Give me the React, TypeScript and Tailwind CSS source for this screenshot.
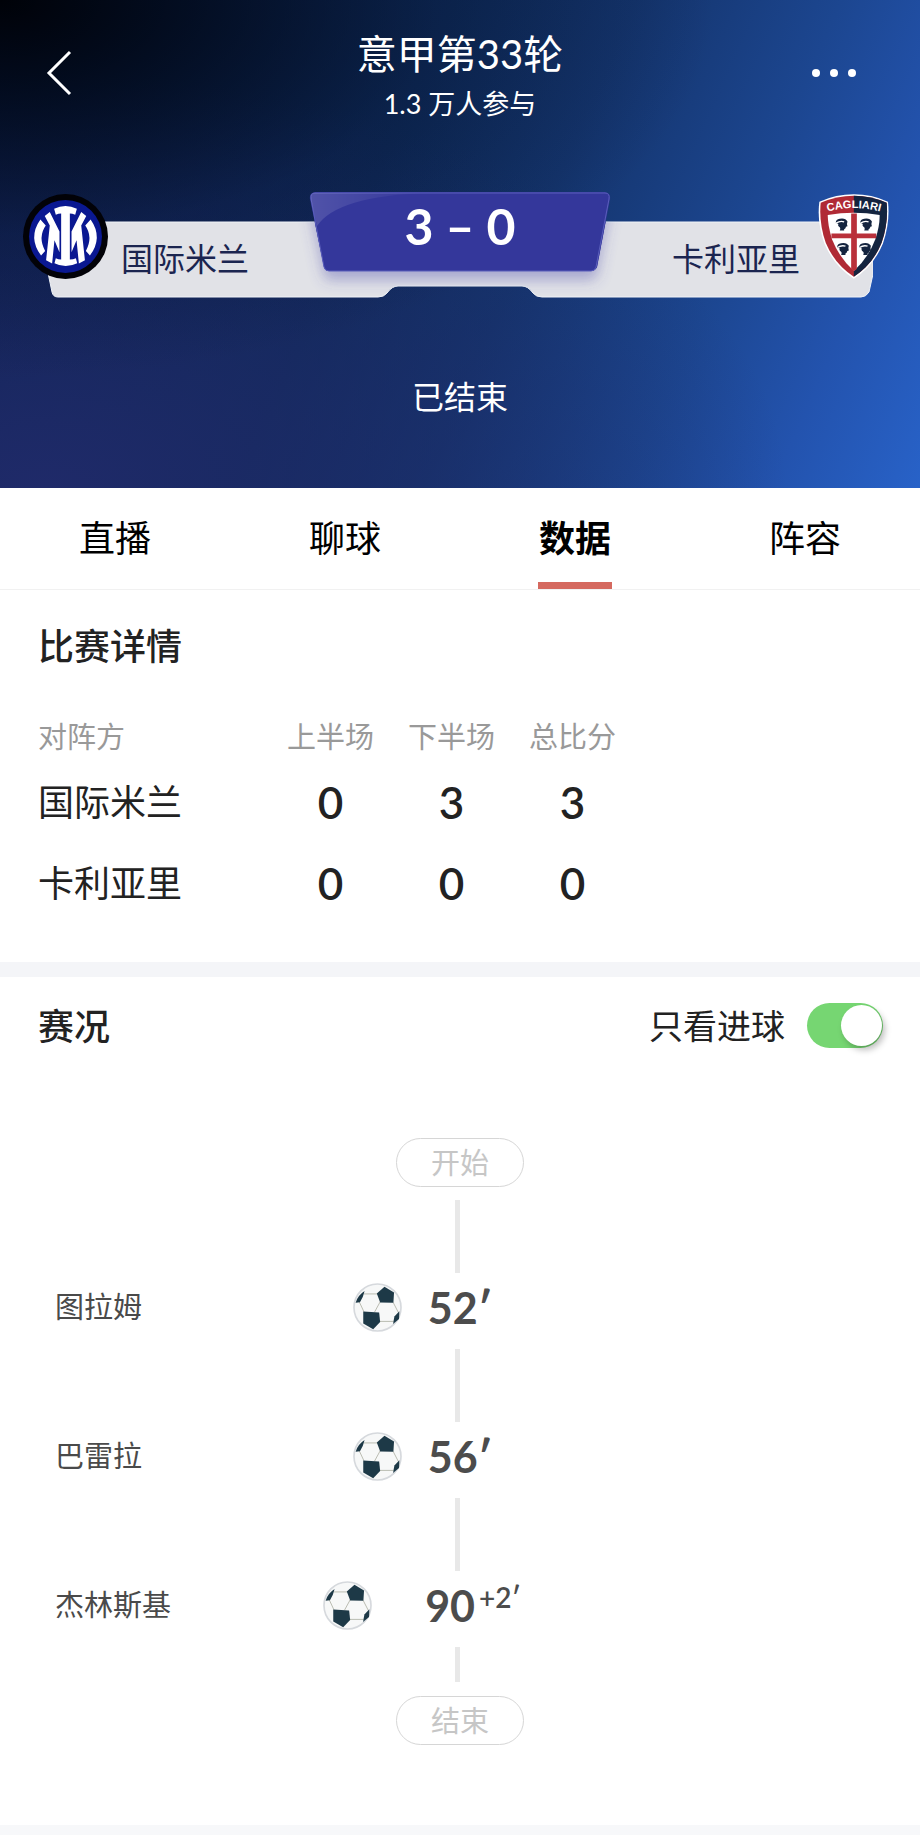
import { useState } from "react";

const tabs = ["直播", "聊球", "数据", "阵容"];

const scores = [
  { team: "国际米兰", values: [0, 3, 3] },
  { team: "卡利亚里", values: [0, 0, 0] },
];

const goals = [
  { player: "图拉姆", minute: "52", extra: "" },
  { player: "巴雷拉", minute: "56", extra: "" },
  { player: "杰林斯基", minute: "90", extra: "+2" },
];

function InterCrest() {
  return (
    <svg viewBox="10 12 254 254" className="size-[85px] shrink-0" role="img" aria-label="国际米兰">
      <circle cx="137" cy="139" r="127" fill="#020207" />
      <circle cx="137" cy="139" r="109" fill="#0a1891" />
      <g fill="#fff">
        <path d="M103 56Q137 40 171 56L166 74Q157 70 150 70V208Q160 208 168 204L172 219Q137 236 104 219L108 204Q116 208 124 208V70Q116 70 108 74Z" />
        <path d="M90 66L75 78L90 106L79 210L97 220L104 150L119 186V124Z" />
        <path d="M184 66L199 78L184 106L195 210L177 220L170 150L155 186V124Z" />
        <path d="M62 88Q24 142 64 196L76 182Q54 140 78 106Z" />
        <path d="M212 88Q250 142 210 196L198 182Q220 140 196 106Z" />
      </g>
    </svg>
  );
}

function MoorHead({ x, y }: { x: number; y: number }) {
  return (
    <g transform={`translate(${x} ${y})`}>
      <path d="M-17-4Q-17-15-5-16Q12-19 18-8Q15 0 18 6Q12 6 12 12Q6 15 8 19H-5Q-1 10-8 7Q-12 4-9 0Z" fill="#14243f" />
      <path d="M-16-3Q-4-11 8-7" stroke="#fff" strokeWidth="4" fill="none" />
    </g>
  );
}

function CagliariCrest() {
  return (
    <svg viewBox="24 16 212 254" className="h-[85px] w-[71px] shrink-0" role="img" aria-label="卡利亚里">
      <defs>
        <path id="crest-arc" d="M50 69Q130 47 212 69" />
        <clipPath id="crest-right">
          <rect x="131" y="10" width="110" height="265" />
        </clipPath>
      </defs>
      <path d="M28 39Q78 17 131 17Q184 17 233 39Q240 100 218 164Q190 232 131 269Q72 232 43 164Q20 100 28 39Z" fill="#fff" />
      <path d="M32 42Q80 21 131 21Q182 21 229 42Q235 100 214 162Q188 226 131 263Q74 226 47 162Q26 100 32 42Z" fill="#b02a35" />
      <path clipPath="url(#crest-right)" d="M32 42Q80 21 131 21Q182 21 229 42Q235 100 214 162Q188 226 131 263Q74 226 47 162Q26 100 32 42Z" fill="#14243f" />
      <path d="M53 79Q131 65 208 79Q209 110 195 152Q175 206 131 246Q87 206 66 152Q53 110 53 79Z" fill="#fff" />
      <path d="M123 74H140V240L131 247L123 240ZM64 134H198V148H64Z" fill="#b9303a" />
      <MoorHead x={94} y={106} />
      <MoorHead x={167} y={106} />
      <MoorHead x={98} y={179} />
      <MoorHead x={164} y={179} />
      <text fill="#fff" fontSize="33" fontWeight="700" fontFamily="Liberation Sans, sans-serif" textAnchor="middle">
        <textPath href="#crest-arc" startOffset="50%">CAGLIARI</textPath>
      </text>
    </svg>
  );
}

function Ball() {
  return (
    <svg viewBox="9 9 148 148" className="size-[49px] shrink-0" role="img" aria-label="进球">
      <circle cx="83" cy="83" r="71" fill="#f7f8f8" stroke="#d6d9dd" strokeWidth="5" />
      <path d="M42 42H84M130 67L146 98M91 66L74 97M42 96L28 66M88 125H132" fill="none" stroke="#b9bbb0" strokeWidth="3" />
      <path d="M104 20L133 38L131 69L91 68L81 41Z" fill="#1d3947" />
      <path d="M40 95L88 98L91 127L70 149L40 131Z" fill="#1d3947" />
      <path d="M44 33Q22 47 17 69L30 67Q40 52 44 33Z" fill="#1d3947" />
      <path d="M149 94L148 118L130 133L134 110Z" fill="#1d3947" />
    </svg>
  );
}

function MatchBanner() {
  return (
    <svg viewBox="0 0 826 130" preserveAspectRatio="none" className="absolute inset-0 h-full w-full" aria-hidden="true">
      <defs>
        <filter id="plate-shadow" x="-10%" y="-20%" width="120%" height="160%">
          <feDropShadow dx="0" dy="9" stdDeviation="7" floodColor="#4a45a8" floodOpacity="0.38" />
        </filter>
        <clipPath id="wings">
          <path d="M0 30H826L826 82L822 100Q819 105 814 105H495Q489 105 486 101Q481 94 475 94H351Q345 94 340 101Q337 105 331 105H11Q6 105 5 100L0 76Z" />
        </clipPath>
        <linearGradient id="plate-shine" x1="0" y1="0" x2="1" y2="0">
          <stop offset="0" stopColor="#fff" stopOpacity="0.14" />
          <stop offset="1" stopColor="#fff" stopOpacity="0" />
        </linearGradient>
      </defs>
      <path d="M0 30H826L826 82L822 100Q819 105 814 105H495Q489 105 486 101Q481 94 475 94H351Q345 94 340 101Q337 105 331 105H11Q6 105 5 100L0 76Z" fill="#e1e2e7" stroke="#f0f3f8" />
      <g clipPath="url(#wings)">
        <path d="M268 0H558Q564 1 563 7L550 75Q548 79 544 79H282Q278 79 277 75L263 7Q262 1 268 0Z" fill="#34379b" filter="url(#plate-shadow)" />
      </g>
      <path d="M268 0H558Q564 1 563 7L550 75Q548 79 544 79H282Q278 79 277 75L263 7Q262 1 268 0Z" fill="#34379b" />
      <path d="M268 1H558Q563 1 562 7L549 75Q548 79 544 79H282Q278 79 277 75L264 7Q263 1 268 1Z" fill="none" stroke="#5a5ebb" />
      <path d="M268 1H380Q290 4 270 34L264 7Q263 1 268 1Z" fill="url(#plate-shine)" />
    </svg>
  );
}

function Connector({ short = false }: { short?: boolean }) {
  return <div className={short ? "mr-[5px] h-[35px] w-[5px] bg-[#e8e8e8]" : "mr-[5px] h-[73px] w-[5px] bg-[#e8e8e8]"} />;
}

function Pill({ children }: { children: string }) {
  return (
    <div className="flex h-[49px] w-32 items-center justify-center rounded-full border border-[#d6d6d6] text-[29px] leading-none text-[#c6c6c6]">
      {children}
    </div>
  );
}

export default function App() {
  const [active, setActive] = useState("数据");
  const [goalsOnly, setGoalsOnly] = useState(true);

  return (
    <div className="min-h-screen bg-white font-['Lato','Noto_Sans_CJK_SC',sans-serif] text-[#222]">
      <header className="bg-[radial-gradient(ellipse_at_0%_0%,#000208_0%,rgba(0,6,18,0.75)_14%,rgba(4,16,44,0.3)_34%,rgba(0,10,40,0)_55%),radial-gradient(ellipse_at_5%_100%,#1f2a69_0%,rgba(31,42,105,0)_60%),linear-gradient(114deg,#0a1d48_0%,#0e2a58_40%,#14346c_56%,#1c4690_74%,#2353ae_87%,#2862c8_100%)] pb-[71px] text-white">
        <div className="flex items-start justify-between px-10 pt-8">
          <button type="button" aria-label="返回" className="mt-[13px] flex h-14 w-20 items-center">
            <svg viewBox="0 0 40 50" className="h-[50px] w-10" fill="none" stroke="currentColor" strokeWidth="3">
              <path d="M30 4L9 25L30 46" />
            </svg>
          </button>
          <div className="flex flex-col items-center">
            <h1 className="text-[40px] leading-[44px]">意甲第33轮</h1>
            <p className="mt-3 text-[27px] leading-8">1.3 万人参与</p>
          </div>
          <button type="button" aria-label="更多" className="mt-[13px] flex h-14 w-20 items-center justify-end gap-[10px] pr-6">
            <span className="size-2 shrink-0 rounded-full bg-white" />
            <span className="size-2 shrink-0 rounded-full bg-white" />
            <span className="size-2 shrink-0 rounded-full bg-white" />
          </button>
        </div>

        <div className="relative mx-[47px] mt-[72px] h-[130px]">
          <MatchBanner />
          <div className="relative -mx-6 grid grid-cols-[1fr_auto_1fr] items-start">
            <div className="flex items-start gap-[13px] pt-[2px]">
              <InterCrest />
              <span className="mt-[47px] text-[32px] leading-9 text-[#1b2550]">国际米兰</span>
            </div>
            <div className="flex gap-3 pt-[9px] text-[50px] leading-[50px] font-bold">
              <span>3</span>
              <span>–</span>
              <span>0</span>
            </div>
            <div className="flex items-start justify-end gap-[18px] pt-[2px] pr-2">
              <span className="mt-[47px] text-[32px] leading-9 text-[#1b2550]">卡利亚里</span>
              <CagliariCrest />
            </div>
          </div>
        </div>

        <p className="mt-[55px] text-center text-[32px] leading-10">已结束</p>
      </header>

      <nav className="grid grid-cols-4 border-b border-[#f1f1f1]">
        {tabs.map((tab) => (
          <button
            key={tab}
            type="button"
            onClick={() => setActive(tab)}
            className="flex flex-col items-center pt-[30px] text-[36px] leading-10 text-black"
          >
            <span className={tab === active ? "font-bold" : ""}>{tab}</span>
            <span className={tab === active ? "mt-6 h-[7px] w-[74px] bg-[#d5695f]" : "mt-6 h-[7px] w-[74px]"} />
          </button>
        ))}
      </nav>

      <section className="border-b-[15px] border-[#f4f5f8] px-[38px] pt-9 pb-[39px]">
        <h2 className="text-[36px] leading-10 font-medium">比赛详情</h2>
        <table className="mt-[47px] table-fixed border-collapse">
          <thead>
            <tr className="h-12 text-[29px] leading-9 text-[#999]">
              <th className="w-[232px] p-0 text-left font-normal">对阵方</th>
              <th className="w-[121px] p-0 font-normal">上半场</th>
              <th className="w-[121px] p-0 font-normal">下半场</th>
              <th className="w-[121px] p-0 font-normal">总比分</th>
            </tr>
          </thead>
          <tbody>
            {scores.map((row) => (
              <tr key={row.team} className="h-[81px] text-[36px] leading-10">
                <th className="p-0 text-left font-normal">{row.team}</th>
                {row.values.map((value, i) => (
                  <td key={i} className="p-0 text-center text-[44px] font-semibold">
                    {value}
                  </td>
                ))}
              </tr>
            ))}
          </tbody>
        </table>
      </section>

      <section className="border-b-[10px] border-[#f7f8fa] pt-[26px] pb-20">
        <div className="flex items-center justify-between pr-[37px] pl-[38px]">
          <h2 className="text-[36px] leading-10 font-medium">赛况</h2>
          <label className="flex cursor-pointer items-center gap-[22px] text-[34px] leading-10">
            只看进球
            <span className="flex h-[45px] w-[76px] items-center rounded-full bg-[#ccc] has-checked:justify-end has-checked:bg-[#76d672]">
              <input
                type="checkbox"
                role="switch"
                checked={goalsOnly}
                onChange={(e) => setGoalsOnly(e.target.checked)}
                className="mx-px size-[41px] cursor-pointer appearance-none rounded-full bg-white shadow-[3px_4px_6px_rgba(0,0,0,0.25)]"
              />
            </span>
          </label>
        </div>

        <div className="mt-[90px] flex flex-col items-center">
          <Pill>开始</Pill>
          <div className="h-[13px]" />
          <Connector />
          {goals.map((goal, i) => (
            <div key={goal.player} className="flex w-full flex-col items-center">
              <div className="grid h-[76px] w-full grid-cols-[1fr_auto_1fr] items-center pb-2">
                <div className="flex items-center justify-between pl-[55px]">
                  <span className="text-[29px] leading-9 text-[#4a4a4a]">{goal.player}</span>
                  <Ball />
                </div>
                <div
                  className={
                    goal.extra
                      ? "flex w-[176px] items-center justify-center pl-[26px] text-[43px] leading-[49px] font-bold text-[#4c4c4c]"
                      : "flex w-[116px] items-center justify-center text-[43px] leading-[49px] font-bold text-[#4c4c4c]"
                  }
                >
                  <span>{goal.minute}</span>
                  {goal.extra ? (
                    <span className="-mt-4 pl-1 text-[28px] leading-9 font-semibold">{goal.extra}′</span>
                  ) : (
                    <span>′</span>
                  )}
                </div>
              </div>
              <Connector short={i === goals.length - 1} />
            </div>
          ))}
          <div className="h-[14px]" />
          <Pill>结束</Pill>
        </div>
      </section>
    </div>
  );
}
